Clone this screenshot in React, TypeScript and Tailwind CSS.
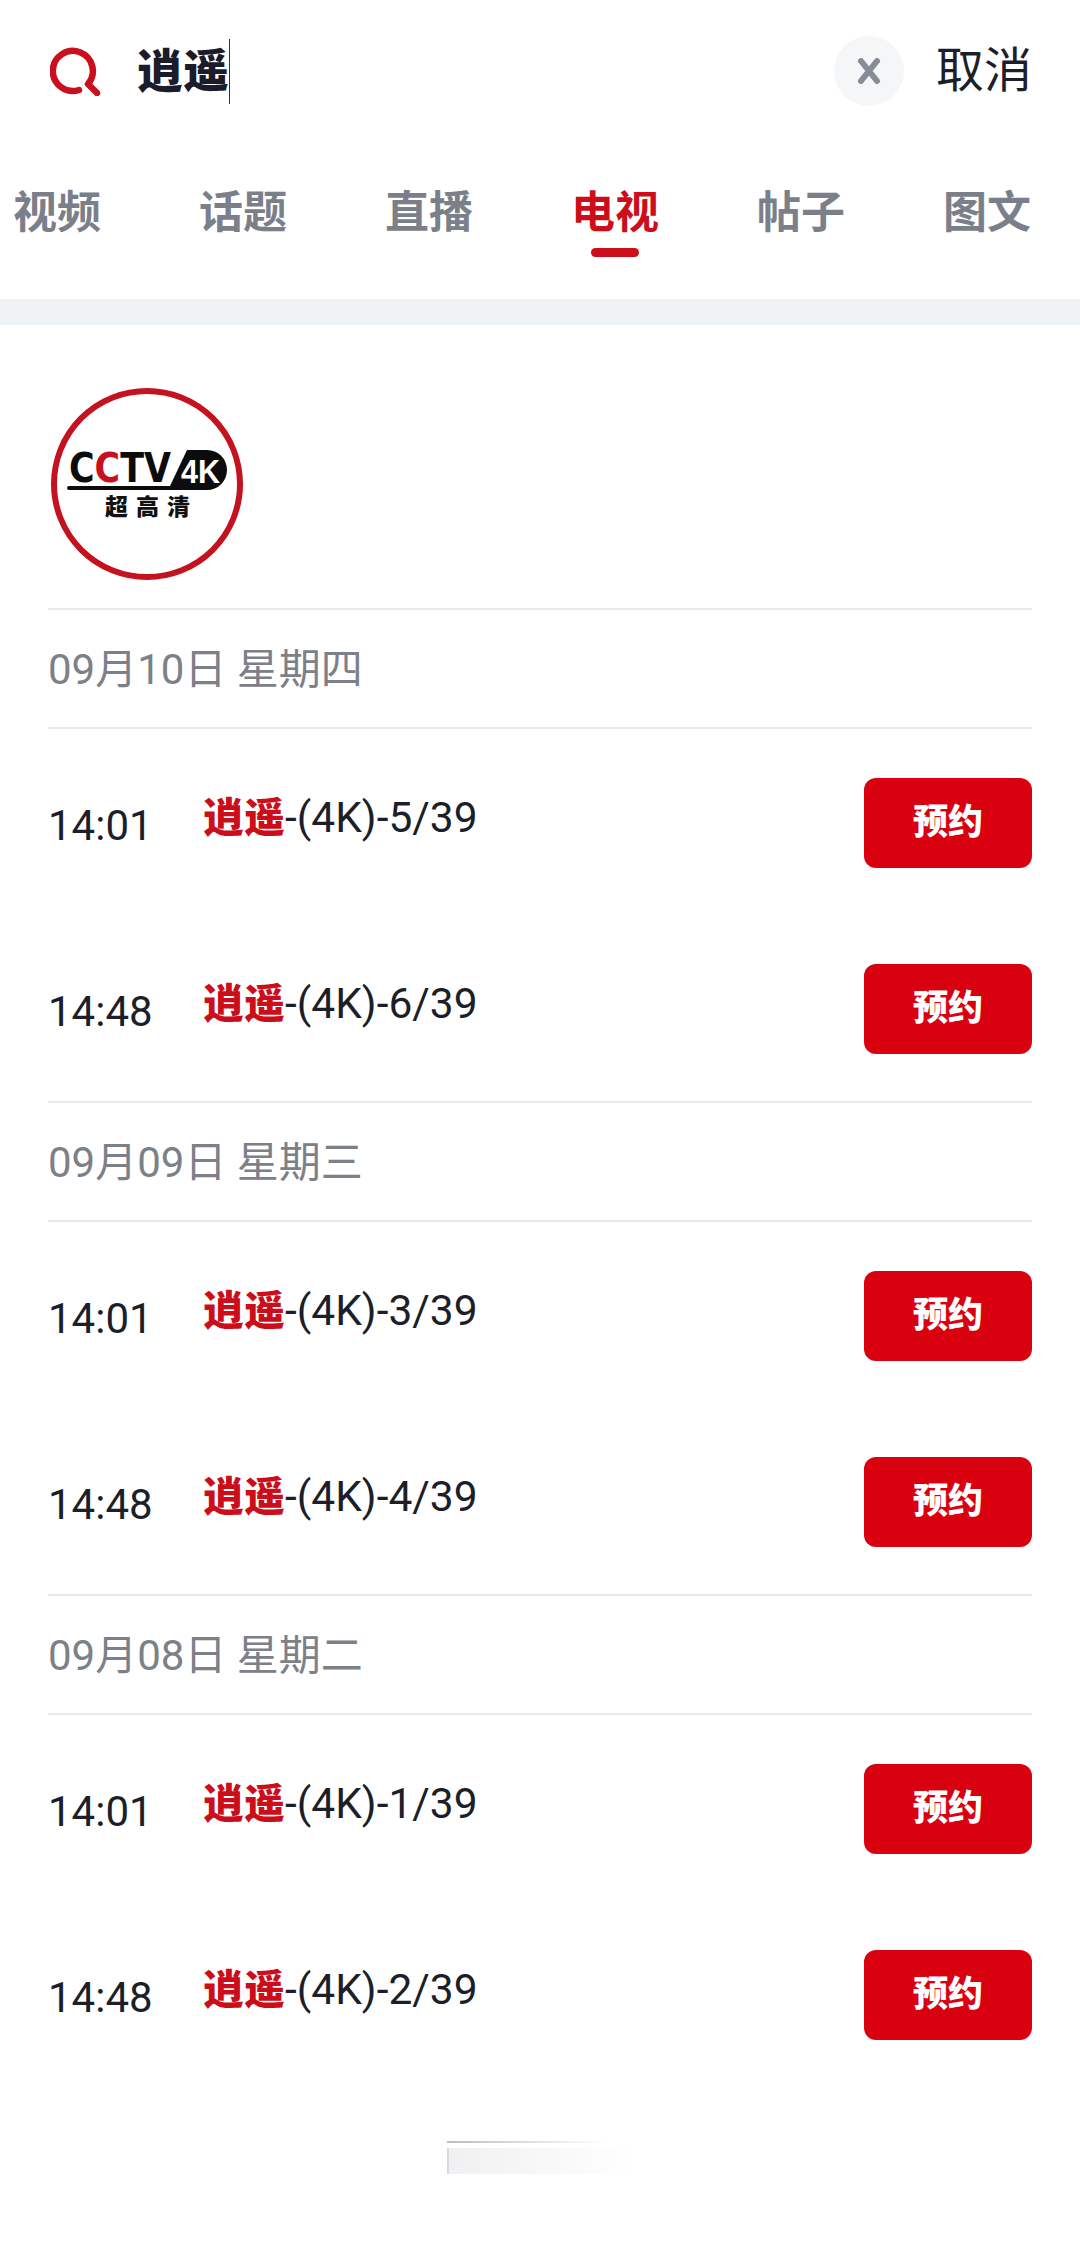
const CJK = "font-['Roboto','Noto_Sans_CJK_SC',sans-serif]";

const tabs = ["视频", "话题", "直播", "电视", "帖子", "图文"];

const days = [
  { date: "09月10日 星期四", rows: [{ time: "14:01", ep: "5" }, { time: "14:48", ep: "6" }] },
  { date: "09月09日 星期三", rows: [{ time: "14:01", ep: "3" }, { time: "14:48", ep: "4" }] },
  { date: "09月08日 星期二", rows: [{ time: "14:01", ep: "1" }, { time: "14:48", ep: "2" }] },
];

const SearchIcon = () => (
  <svg width="52" height="50" viewBox="0 0 52 50" fill="none" stroke="#c8101e" strokeWidth="6.5" strokeLinecap="round" strokeLinejoin="round">
    <path d="M29 44A20 20 0 1 1 38 38L47 47" />
  </svg>
);

const Logo = () => (
  <svg width="192" height="192" viewBox="0 0 192 192" fill="none">
    <circle cx="96" cy="96" r="93" stroke="#c4121f" strokeWidth="6" fill="#fff" />
    <path d="M136 62H156A20 20 0 0 1 156 102H18A2 2 0 0 1 18 98H119Z" fill="#0c0c0c" />
    <text x="18" y="94" fontFamily="DejaVu Sans" fontWeight="700" fontSize="40" textLength="102" lengthAdjust="spacingAndGlyphs" fill="#0c0c0c">
      C<tspan fill="#c8101e">C</tspan>TV
    </text>
    <text x="130" y="95" fontFamily="Liberation Sans" fontWeight="700" fontSize="33" textLength="39" lengthAdjust="spacingAndGlyphs" fill="#fff">
      4K
    </text>
    <text x="54" y="127" fontFamily="Noto Sans CJK SC" fontWeight="900" fontSize="23" letterSpacing="8" fill="#111">
      超高清
    </text>
  </svg>
);

const Row = ({ time, ep }: { time: string; ep: string }) => (
  <div className="flex items-center h-[90px]">
    <span className="w-[155px] pt-[5px] text-[42px] leading-none text-[#1c1f2a]">{time}</span>
    <span className="flex-1 pb-[9px] text-[42.5px] leading-none text-[#1c1f2a]">
      <b className="text-[41px] font-black text-[#cc0e1a]">逍遥</b>-(4K)-{ep}/39
    </span>
    <button className="w-[168px] h-[90px] rounded-[12px] bg-[#d9000f] text-white text-[35px] font-black">预约</button>
  </div>
);

export default function App() {
  return (
    <div className={`w-[1080px] h-[2243px] overflow-hidden bg-white ${CJK}`}>
      {/* search bar */}
      <div className="flex items-center h-[142px] pl-[50px] pr-[48px]">
        <SearchIcon />
        <div className="flex items-center ml-[35px] flex-1">
          <span className="text-[46px] leading-none font-black text-[#1a1b2b]">逍遥</span>
          <span className="w-px h-[65px] bg-[#333]" />
        </div>
        <div className="flex items-center justify-center w-[70px] h-[70px] rounded-full bg-[#f5f6f7]">
          <svg width="26" height="26" viewBox="0 0 26 26" stroke="#888c98" strokeWidth="6" strokeLinecap="round">
            <path d="M5 3L21 23M21 3L5 23" />
          </svg>
        </div>
        <span className="ml-[32px] text-[48px] leading-none text-[#1c1f2a]">取消</span>
      </div>

      {/* tabs */}
      <div className="flex h-[157px] ml-[-36px] pt-[48px]">
        {tabs.map((t) => (
          <div key={t} className="flex flex-col items-center w-[186px] shrink-0">
            <span className={`text-[44px] leading-[46px] font-bold ${t === "电视" ? "text-[#cc0e1a]" : "text-[#7b7f8a]"}`}>{t}</span>
            {t === "电视" && <span className="mt-[12px] w-[48px] h-[9px] rounded-full bg-[#cc0e1a]" />}
          </div>
        ))}
      </div>

      <div className="h-[26px] bg-[#eff3f6]" />

      <div className="px-[48px]">
        <div className="pt-[63px] pb-[28px] pl-[3px]">
          <Logo />
        </div>
        {days.map((d) => (
          <div key={d.date}>
            <div className="flex items-center h-[121px] pt-[2px] border-y-2 border-[#e8e9ec] -mb-[2px] text-[42px] leading-none text-[#7c8088]">
              {d.date}
            </div>
            <div className="flex flex-col gap-[96px] pt-[51px] pb-[47px]">
              {d.rows.map((r) => (
                <Row key={r.ep} time={r.time} ep={r.ep} />
              ))}
            </div>
          </div>
        ))}
      </div>

      {/* fading placeholder at the bottom of the list */}
      <div className="ml-[447px] mt-[54px] w-[185px]">
        <div className="h-[2px] w-[160px] bg-gradient-to-r from-[#bdbdc0] to-white" />
        <div className="mt-[5px] h-[26px] border-l-2 border-[#d8d8da] bg-gradient-to-r from-[#f0f0f2] to-white" />
      </div>
    </div>
  );
}
